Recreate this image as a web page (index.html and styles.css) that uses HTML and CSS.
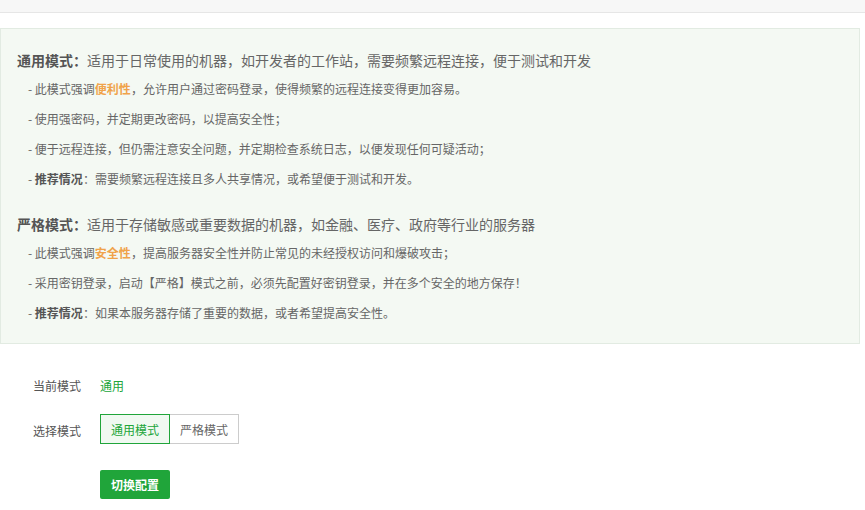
FILE: index.html
```html
<!DOCTYPE html>
<html lang="zh">
<head>
<meta charset="utf-8">
<title>SSH 模式</title>
<link rel="stylesheet" href="styles.css">
</head>
<body>
<div class="topbar"></div>
<div class="panel">
  <div class="section">
    <p class="head"><b>通用模式：</b>适用于日常使用的机器，如开发者的工作站，需要频繁远程连接，便于测试和开发</p>
    <p class="item">- 此模式强调<span class="hl">便利性</span>，允许用户通过密码登录，使得频繁的远程连接变得更加容易。</p>
    <p class="item">- 使用强密码，并定期更改密码，以提高安全性；</p>
    <p class="item">- 便于远程连接，但仍需注意安全问题，并定期检查系统日志，以便发现任何可疑活动；</p>
    <p class="item">- <b>推荐情况</b>：需要频繁远程连接且多人共享情况，或希望便于测试和开发。</p>
  </div>
  <div class="section second">
    <p class="head"><b>严格模式：</b>适用于存储敏感或重要数据的机器，如金融、医疗、政府等行业的服务器</p>
    <p class="item">- 此模式强调<span class="hl">安全性</span>，提高服务器安全性并防止常见的未经授权访问和爆破攻击；</p>
    <p class="item">- 采用密钥登录，启动【严格】模式之前，必须先配置好密钥登录，并在多个安全的地方保存！</p>
    <p class="item">- <b>推荐情况</b>：如果本服务器存储了重要的数据，或者希望提高安全性。</p>
  </div>
</div>
<div class="form">
  <div class="row row-current">
    <span class="label">当前模式</span>
    <span class="value">通用</span>
  </div>
  <div class="row row-select">
    <span class="label">选择模式</span>
    <div class="group">
      <button class="opt active">通用模式</button>
      <button class="opt">严格模式</button>
    </div>
  </div>
  <div class="row row-submit">
    <span class="label"></span>
    <button class="submit">切换配置</button>
  </div>
</div>
</body>
</html>
```

FILE: styles.css
```css
* { box-sizing: border-box; }
html, body { margin: 0; padding: 0; background: #fff; }
body {
  font-family: "Noto Sans CJK SC", "Liberation Sans", sans-serif;
  font-size: 12px;
  color: #666;
}
.topbar {
  height: 13px;
  background: #f7f7f7;
  border-bottom: 1px solid #e6e6e6;
}
.panel {
  margin: 15px 5px 0 0;
  background: #f4f9f3;
  border: 1px solid #e2ebe2;
  padding: 17px 16px 15px 16px;
}
.section p { margin: 0; }
.second { margin-top: 16px; }
.head {
  font-size: 14px;
  line-height: 28px;
  color: #666;
}
.head b { color: #555; font-weight: bold; }
.item {
  font-size: 12px;
  line-height: 30px;
  padding-left: 11px;
  color: #666;
}
.item b { color: #555; font-weight: bold; }
.hl { color: #f0a34a; font-weight: bold; }
.form { padding-left: 33px; }
.row {
  display: flex;
  align-items: center;
  height: 30px;
}
.row-current { margin-top: 26px; }
.row-select { margin-top: 14px; }
.row-submit { margin-top: 25px; }
.label {
  width: 67px;
  flex: none;
  color: #555;
  font-size: 12px;
}
.row-select .label { padding-top: 3px; }
.value { color: #20a53a; font-size: 12px; }
.group { display: flex; }
.opt {
  font-family: inherit;
  font-size: 12px;
  height: 30px;
  width: 69px;
  padding: 0;
  margin: 0;
  background: #fff;
  color: #666;
  border: 1px solid #ccc;
  border-left: none;
  cursor: pointer;
}
.opt.active {
  background: #f0f9f1;
  color: #20a53a;
  border: 1px solid #20a53a;
  width: 70px;
}
.submit {
  font-family: inherit;
  font-size: 12px;
  font-weight: bold;
  height: 29px;
  width: 70px;
  padding: 0;
  border: none;
  border-radius: 2px;
  background: #20a53a;
  color: #fff;
  cursor: pointer;
}
```
